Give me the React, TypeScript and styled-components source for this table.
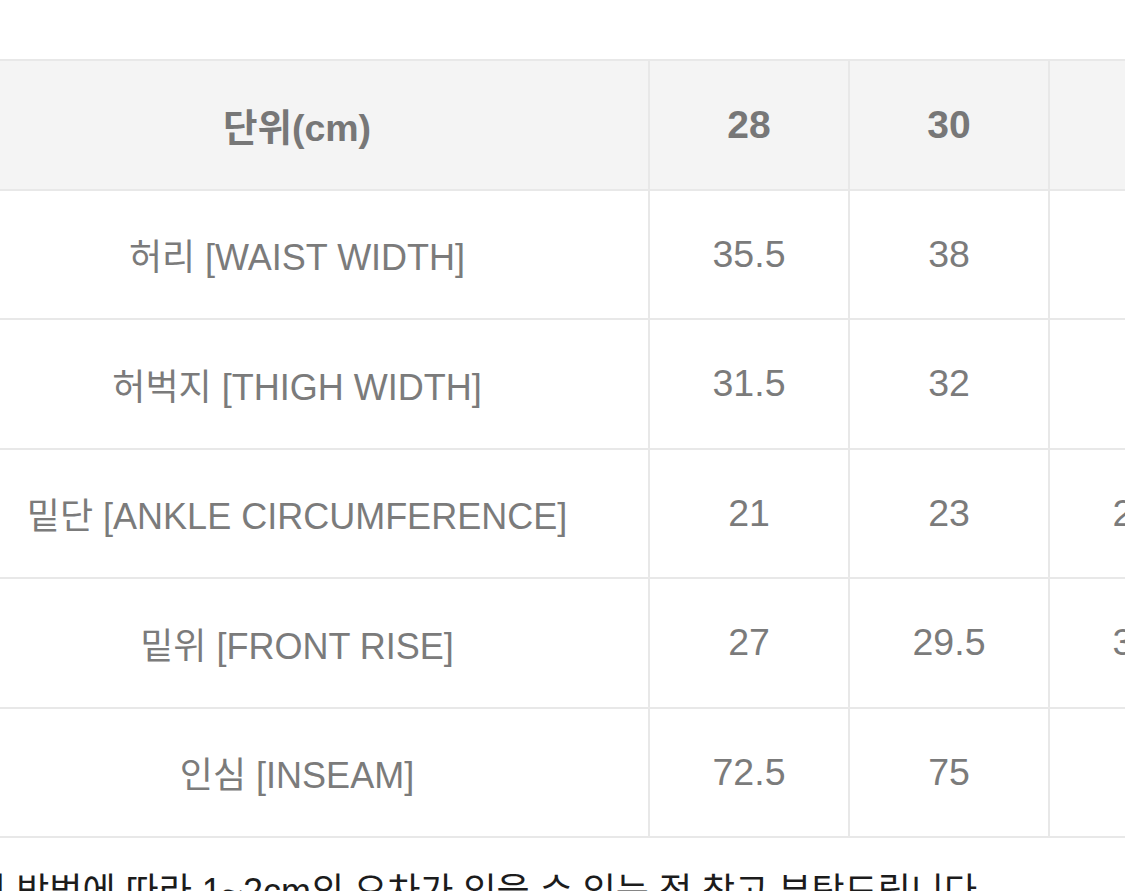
import React from "react";
import styled, { createGlobalStyle } from "styled-components";

const GlobalStyle = createGlobalStyle`
  html, body {
    margin: 0;
    padding: 0;
    background: #ffffff;
    overflow: hidden;
  }
  body {
    font-family: "Liberation Sans", "Noto Sans CJK KR", Arial, sans-serif;
  }
`;

const Page = styled.div`
  width: 1600px;
  margin-left: -56px;
  padding-top: 59px;
`;

const SizeTable = styled.table`
  border-collapse: collapse;
  table-layout: fixed;
  width: 1494px;
  font-size: 36px;
  color: #7b7b7b;
`;

const HeadCell = styled.th<{ $wide?: boolean }>`
  width: ${(p) => (p.$wide ? "702px" : "198px")};
  height: 127.5px;
  padding: 0;
  background: #f4f4f4;
  border: 2px solid #e8e8e8;
  font-weight: 700;
  font-size: ${(p) => (p.$wide ? "37.5px" : "39px")};
  color: #777777;
  text-align: center;
  vertical-align: middle;
`;

const Cell = styled.td<{ $num?: boolean }>`
  height: 127.5px;
  padding: 0;
  border: 2px solid #e8e8e8;
  font-size: ${(p) => (p.$num ? "37.5px" : "36px")};
  text-align: center;
  vertical-align: middle;
  white-space: nowrap;
`;

const Note = styled.p`
  margin: 24px 0 0 -4px;
  font-size: 36px;
  color: #1c1c1c;
  white-space: nowrap;
`;

const sizes = ["28", "30", "32", "34", "36"];

const rows: { label: string; values: string[] }[] = [
  { label: "허리 [WAIST WIDTH]", values: ["35.5", "38", "41", "43", "45.5"] },
  { label: "허벅지 [THIGH WIDTH]", values: ["31.5", "32", "33", "34", "35"] },
  { label: "밑단 [ANKLE CIRCUMFERENCE]", values: ["21", "23", "24.5", "26", "27"] },
  { label: "밑위 [FRONT RISE]", values: ["27", "29.5", "32.5", "34", "35"] },
  { label: "인심 [INSEAM]", values: ["72.5", "75", "77", "78", "79"] },
];

export default function App() {
  return (
    <>
      <GlobalStyle />
      <Page>
        <SizeTable>
          <thead>
            <tr>
              <HeadCell $wide>단위(cm)</HeadCell>
              {sizes.map((s) => (
                <HeadCell key={s}>{s}</HeadCell>
              ))}
            </tr>
          </thead>
          <tbody>
            {rows.map((r) => (
              <tr key={r.label}>
                <Cell>{r.label}</Cell>
                {r.values.map((v, i) => (
                  <Cell key={i} $num>
                    {v}
                  </Cell>
                ))}
              </tr>
            ))}
          </tbody>
        </SizeTable>
        <Note>측정 방법에 따라 1~2cm의 오차가 있을 수 있는 점 참고 부탁드립니다.</Note>
      </Page>
    </>
  );
}
